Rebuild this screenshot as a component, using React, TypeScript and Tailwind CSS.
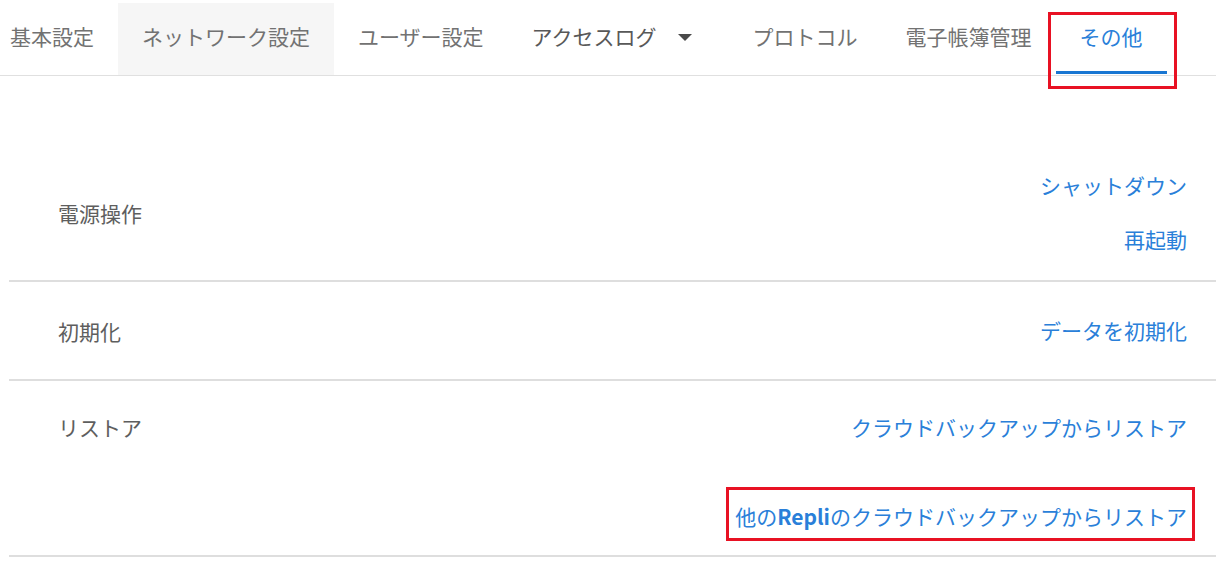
const tabs = [
  { label: "基本設定" },
  { label: "ネットワーク設定", shaded: true },
  { label: "ユーザー設定" },
  { label: "アクセスログ", menu: true },
  { label: "プロトコル" },
  { label: "電子帳簿管理" },
  { label: "その他", active: true },
];

const font = { fontFamily: '"Noto Sans CJK JP", "Noto Sans", sans-serif' };

function Caret() {
  return (
    <svg width="24" height="24" viewBox="0 0 24 24" className="ml-4">
      <path d="M5 9h14l-7 7z" fill="#4a4a4a" />
    </svg>
  );
}

function LinkText({ children }: { children: React.ReactNode }) {
  return (
    <a className="h-[30px] leading-[28px] text-[21px] text-[#2a7fd9] cursor-pointer whitespace-nowrap">
      {children}
    </a>
  );
}

export default function App() {
  return (
    <div className="w-[1216px] h-[576px] bg-white overflow-hidden" style={font}>
      {/* Tabs */}
      <div className="pt-[3px] border-b border-[#e0e0e0]">
        <div className="flex -ml-[14px]">
          {tabs.map((t) => (
            <div
              key={t.label}
              className={`relative h-[72px] flex items-center pb-[5px] px-6 text-[21px] whitespace-nowrap ${
                t.shaded ? "bg-[#f6f6f6]" : ""
              } ${t.active ? "text-[#2a7fd9]" : t.menu ? "text-[#585858] pr-8" : "text-[#727272]"}`}
            >
              {t.label}
              {t.menu && <Caret />}
              {t.active && (
                <>
                  <span className="absolute left-0 right-0 bottom-[1px] h-[3px] bg-[#1976d2]" />
                  <span className="absolute -left-2 -right-[10px] top-[9px] -bottom-[14px] border-[3px] border-[#e81123] pointer-events-none" />
                </>
              )}
            </div>
          ))}
        </div>
      </div>

      {/* Settings rows */}
      <div className="ml-[9px] pt-[70px] text-[21px]">
        <div className="h-[136px] flex items-center justify-between border-b-2 border-[#dedede] pl-[49px] pr-[29px]">
          <span className="leading-[28px] text-[#5e5e5e]">電源操作</span>
          <div className="flex flex-col items-end gap-6">
            <LinkText>シャットダウン</LinkText>
            <LinkText>再起動</LinkText>
          </div>
        </div>

        <div className="h-[99px] flex items-center justify-between border-b-2 border-[#dedede] pl-[49px] pr-[29px]">
          <span className="leading-[28px] text-[#5e5e5e]">初期化</span>
          <LinkText>データを初期化</LinkText>
        </div>

        <div className="h-[176px] flex items-start justify-between border-b-2 border-[#dedede] pl-[49px] pr-[29px] pt-8">
          <span className="h-[30px] leading-[28px] text-[#5e5e5e]">リストア</span>
          <div className="flex flex-col items-end gap-[58px]">
            <LinkText>クラウドバックアップからリストア</LinkText>
            <div className="relative">
              <LinkText>
                他の<span className="font-bold">Repli</span>のクラウドバックアップからリストア
              </LinkText>
              <span className="absolute w-[469px] -right-2 -top-[14px] -bottom-[8px] border-[3px] border-[#e81123] pointer-events-none" />
            </div>
          </div>
        </div>
      </div>
    </div>
  );
}
